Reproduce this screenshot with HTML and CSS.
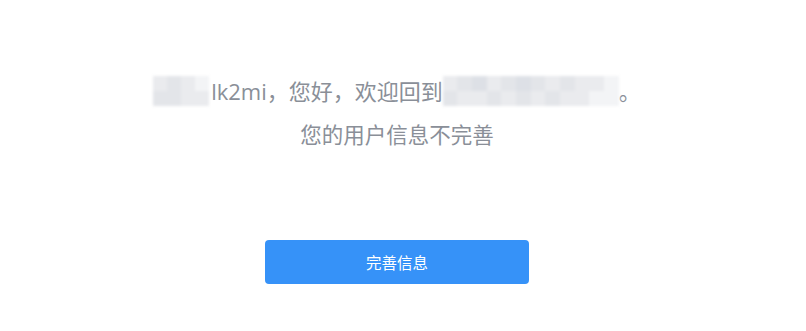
FILE: index.html
```html
<!DOCTYPE html>
<html lang="zh-CN">
<head>
<meta charset="utf-8">
<title>完善信息</title>
<link rel="stylesheet" href="styles.css">
</head>
<body>
<main class="page">
  <div class="greeting">
    <span class="mosaic m1">
      <i class="c1"></i><i class="c2"></i><i class="c1"></i><i class="c0"></i>
      <i class="c2"></i><i class="c2"></i><i class="c1"></i><i class="c1"></i>
    </span><span class="txt first">lk2mi，您好，欢迎回到</span><span class="mosaic m2">
      <i class="c1"></i><i class="c2"></i><i class="c3"></i><i class="c1"></i><i class="c2"></i><i class="c3"></i><i class="c2"></i><i class="c1"></i><i class="c2"></i><i class="c1"></i><i class="c1"></i><i class="c0"></i>
      <i class="c2"></i><i class="c1"></i><i class="c1"></i><i class="c2"></i><i class="c1"></i><i class="c2"></i><i class="c1"></i><i class="c2"></i><i class="c1"></i><i class="c1"></i><i class="c0"></i><i class="c0"></i>
    </span><span class="txt">。</span>
  </div>
  <div class="notice">您的用户信息不完善</div>
  <button class="btn" type="button">完善信息</button>
</main>
</body>
</html>
```
FILE: styles.css
```css
html, body {
  margin: 0;
  padding: 0;
  background: #ffffff;
}
body {
  font-family: "Open Sans", "Noto Sans CJK SC", sans-serif;
  color: #8a8f98;
}
.page {
  width: 794px;
  padding-top: 71px;
  display: flex;
  flex-direction: column;
  align-items: center;
}
.greeting {
  display: flex;
  align-items: center;
  height: 40px;
  font-size: 22px;
  line-height: 40px;
}
.first {
  margin-left: 2px;
}
.mosaic {
  display: grid;
  grid-template-rows: 15px 15px;
  filter: blur(1.5px);
}
.m1 {
  width: 56px;
  grid-template-columns: repeat(4, 1fr);
}
.m2 {
  width: 176px;
  grid-template-columns: repeat(12, 1fr);
}
.mosaic i { display: block; }
.c0 { background: #f3f4f6; }
.c1 { background: #eaebee; }
.c2 { background: #e3e5e9; }
.c3 { background: #dde0e6; }
.notice {
  height: 40px;
  line-height: 40px;
  font-size: 21.5px;
  margin-top: 4px;
}
.btn {
  margin-top: 85px;
  width: 264px;
  height: 44px;
  border: none;
  border-radius: 4px;
  background: #3692f8;
  color: #ffffff;
  font-family: "Noto Sans CJK SC", sans-serif;
  font-size: 15.5px;
  padding: 0;
}
```
